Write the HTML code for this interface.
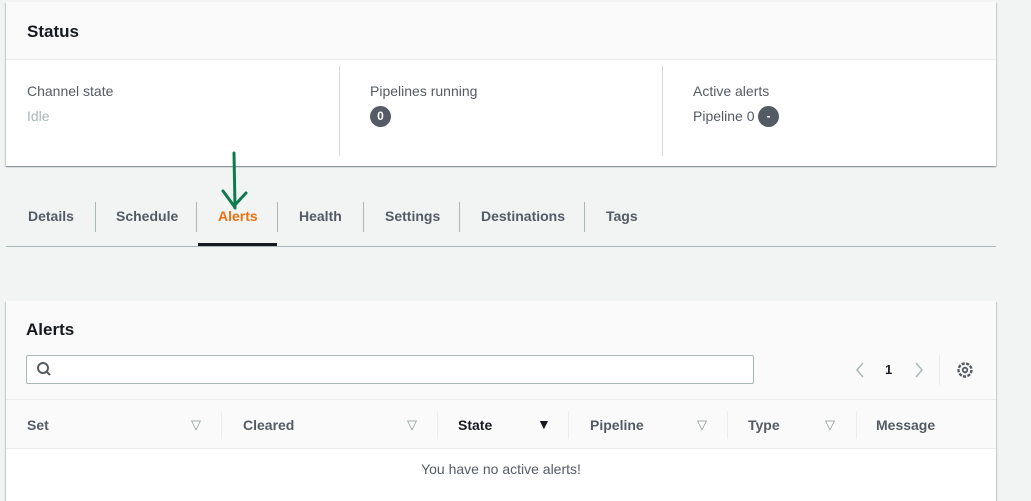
<!DOCTYPE html>
<html><head><style>
*{box-sizing:border-box;margin:0;padding:0}
body{width:1031px;height:496px;background:#f2f3f3;font-family:"Liberation Sans",sans-serif;position:relative;overflow:hidden;color:#16191f}
.abs{position:absolute}
.card{position:absolute;left:6px;width:990px;background:#fff;box-shadow:0 1px 1px rgba(0,28,36,.3),1px 1px 1px rgba(0,28,36,.15),-1px 1px 1px rgba(0,28,36,.15)}
.t{font-size:14px;color:#16191f}
.b{font-weight:bold}
.badge{display:inline-block;background:#545b64;color:#fff;font-size:12px;font-weight:bold;border-radius:11px;height:21px;min-width:21px;text-align:center;line-height:21px}
.tab{position:absolute;top:208px;font-size:14px;font-weight:bold;color:#545b64}
.sep{position:absolute;width:1px;background:#aab7b8}
.th{position:absolute;top:417px;font-size:14px;font-weight:bold;color:#545b64}
.tri{position:absolute;top:417px;font-size:13px;color:#879596}
</style></head><body>
<div class="card" style="top:2px;height:164px">
  <div class="abs" style="left:0;top:0;width:990px;height:58px;background:#fafafa;border-bottom:1px solid #eaeded"></div>
  <div class="abs t b" style="left:21px;top:20px;font-size:17px">Status</div>
  <div class="abs t" style="left:21px;top:81px;color:#545b64">Channel state</div>
  <div class="abs t" style="left:21px;top:106px;color:#aab7b8">Idle</div>
  <div class="sep" style="left:333px;top:64px;height:90px;background:#d5dbdb"></div>
  <div class="abs t" style="left:364px;top:81px;color:#545b64">Pipelines running</div>
  <div class="abs" style="left:364px;top:104px"><span class="badge">0</span></div>
  <div class="sep" style="left:656px;top:64px;height:90px;background:#d5dbdb"></div>
  <div class="abs t" style="left:687px;top:81px;color:#545b64">Active alerts</div>
  <div class="abs t" style="left:687px;top:106px;color:#545b64">Pipeline 0</div>
  <div class="abs" style="left:752px;top:104px"><span class="badge">-</span></div>
</div>
<svg class="abs" style="left:220px;top:150px" width="30" height="62"><path d="M14 3 L15 58 M3 41 L14 56 L26 43" stroke="#0e7a4f" stroke-width="3" fill="none" stroke-linecap="round"/></svg>
<div class="tab" style="left:28px">Details</div>
<div class="sep" style="left:95px;top:202px;height:30px"></div>
<div class="tab" style="left:116px">Schedule</div>
<div class="sep" style="left:196px;top:202px;height:30px"></div>
<div class="tab" style="left:218px;color:#ec7211">Alerts</div>
<div class="abs" style="left:198px;top:243px;width:79px;height:3px;background:#16191f"></div>
<div class="sep" style="left:277px;top:202px;height:30px"></div>
<div class="tab" style="left:299px">Health</div>
<div class="sep" style="left:363px;top:202px;height:30px"></div>
<div class="tab" style="left:385px">Settings</div>
<div class="sep" style="left:459px;top:202px;height:30px"></div>
<div class="tab" style="left:481px">Destinations</div>
<div class="sep" style="left:584px;top:202px;height:30px"></div>
<div class="tab" style="left:606px">Tags</div>
<div class="abs" style="left:6px;top:246px;width:990px;height:1px;background:#aab7b8"></div>

<div class="card" style="top:301px;height:200px">
  <div class="abs" style="left:0;top:0;width:990px;height:99px;background:#fafafa;border-bottom:1px solid #eaeded"></div>
  <div class="abs t b" style="left:20px;top:19px;font-size:17px">Alerts</div>
  <div class="abs" style="left:20px;top:54px;width:728px;height:29px;background:#fff;border:1px solid #aab7b8;border-radius:2px"></div>
  <svg class="abs" style="left:30px;top:60px" width="16" height="16"><circle cx="7" cy="7" r="5" stroke="#545b64" stroke-width="2" fill="none"/><path d="M11 11 L14 14" stroke="#545b64" stroke-width="2"/></svg>
  <svg class="abs" style="left:848px;top:60px" width="12" height="18"><path d="M9 2 L3 9 L9 16" stroke="#aab7b8" stroke-width="1.5" fill="none"/></svg>
  <div class="abs t b" style="left:879px;top:61px;font-size:13px">1</div>
  <svg class="abs" style="left:907px;top:60px" width="12" height="18"><path d="M3 2 L9 9 L3 16" stroke="#aab7b8" stroke-width="1.5" fill="none"/></svg>
  <div class="abs" style="left:933px;top:54px;width:1px;height:30px;background:#eaeded"></div>
  <svg class="abs" style="left:949px;top:59px" width="20" height="20"><circle cx="10" cy="10" r="6.5" stroke="#545b64" stroke-width="2.4" fill="none" stroke-dasharray="3.2 1.3"/><circle cx="10" cy="10" r="2.3" stroke="#545b64" stroke-width="1.8" fill="none"/></svg>
  <div class="abs" style="left:0;top:99px;width:990px;height:49px;background:#fafafa;border-bottom:1px solid #eaeded"></div>
</div>
<div class="th" style="left:27px">Set</div><div class="tri" style="left:191px">▽</div>
<div class="sep" style="left:221px;top:411px;height:28px;background:#eaeded"></div>
<div class="th" style="left:243px">Cleared</div><div class="tri" style="left:407px">▽</div>
<div class="sep" style="left:437px;top:411px;height:28px;background:#eaeded"></div>
<div class="th" style="left:458px;color:#16191f">State</div><div class="tri" style="left:537px;color:#16191f;font-size:14px;top:416px">▼</div>
<div class="sep" style="left:568px;top:411px;height:28px;background:#eaeded"></div>
<div class="th" style="left:590px">Pipeline</div><div class="tri" style="left:697px">▽</div>
<div class="sep" style="left:727px;top:411px;height:28px;background:#eaeded"></div>
<div class="th" style="left:748px">Type</div><div class="tri" style="left:825px">▽</div>
<div class="sep" style="left:856px;top:411px;height:28px;background:#eaeded"></div>
<div class="th" style="left:876px">Message</div>
<div class="abs" style="left:6px;width:990px;top:461px;text-align:center;font-size:14px;color:#545b64">You have no active alerts!</div>
</body></html>
